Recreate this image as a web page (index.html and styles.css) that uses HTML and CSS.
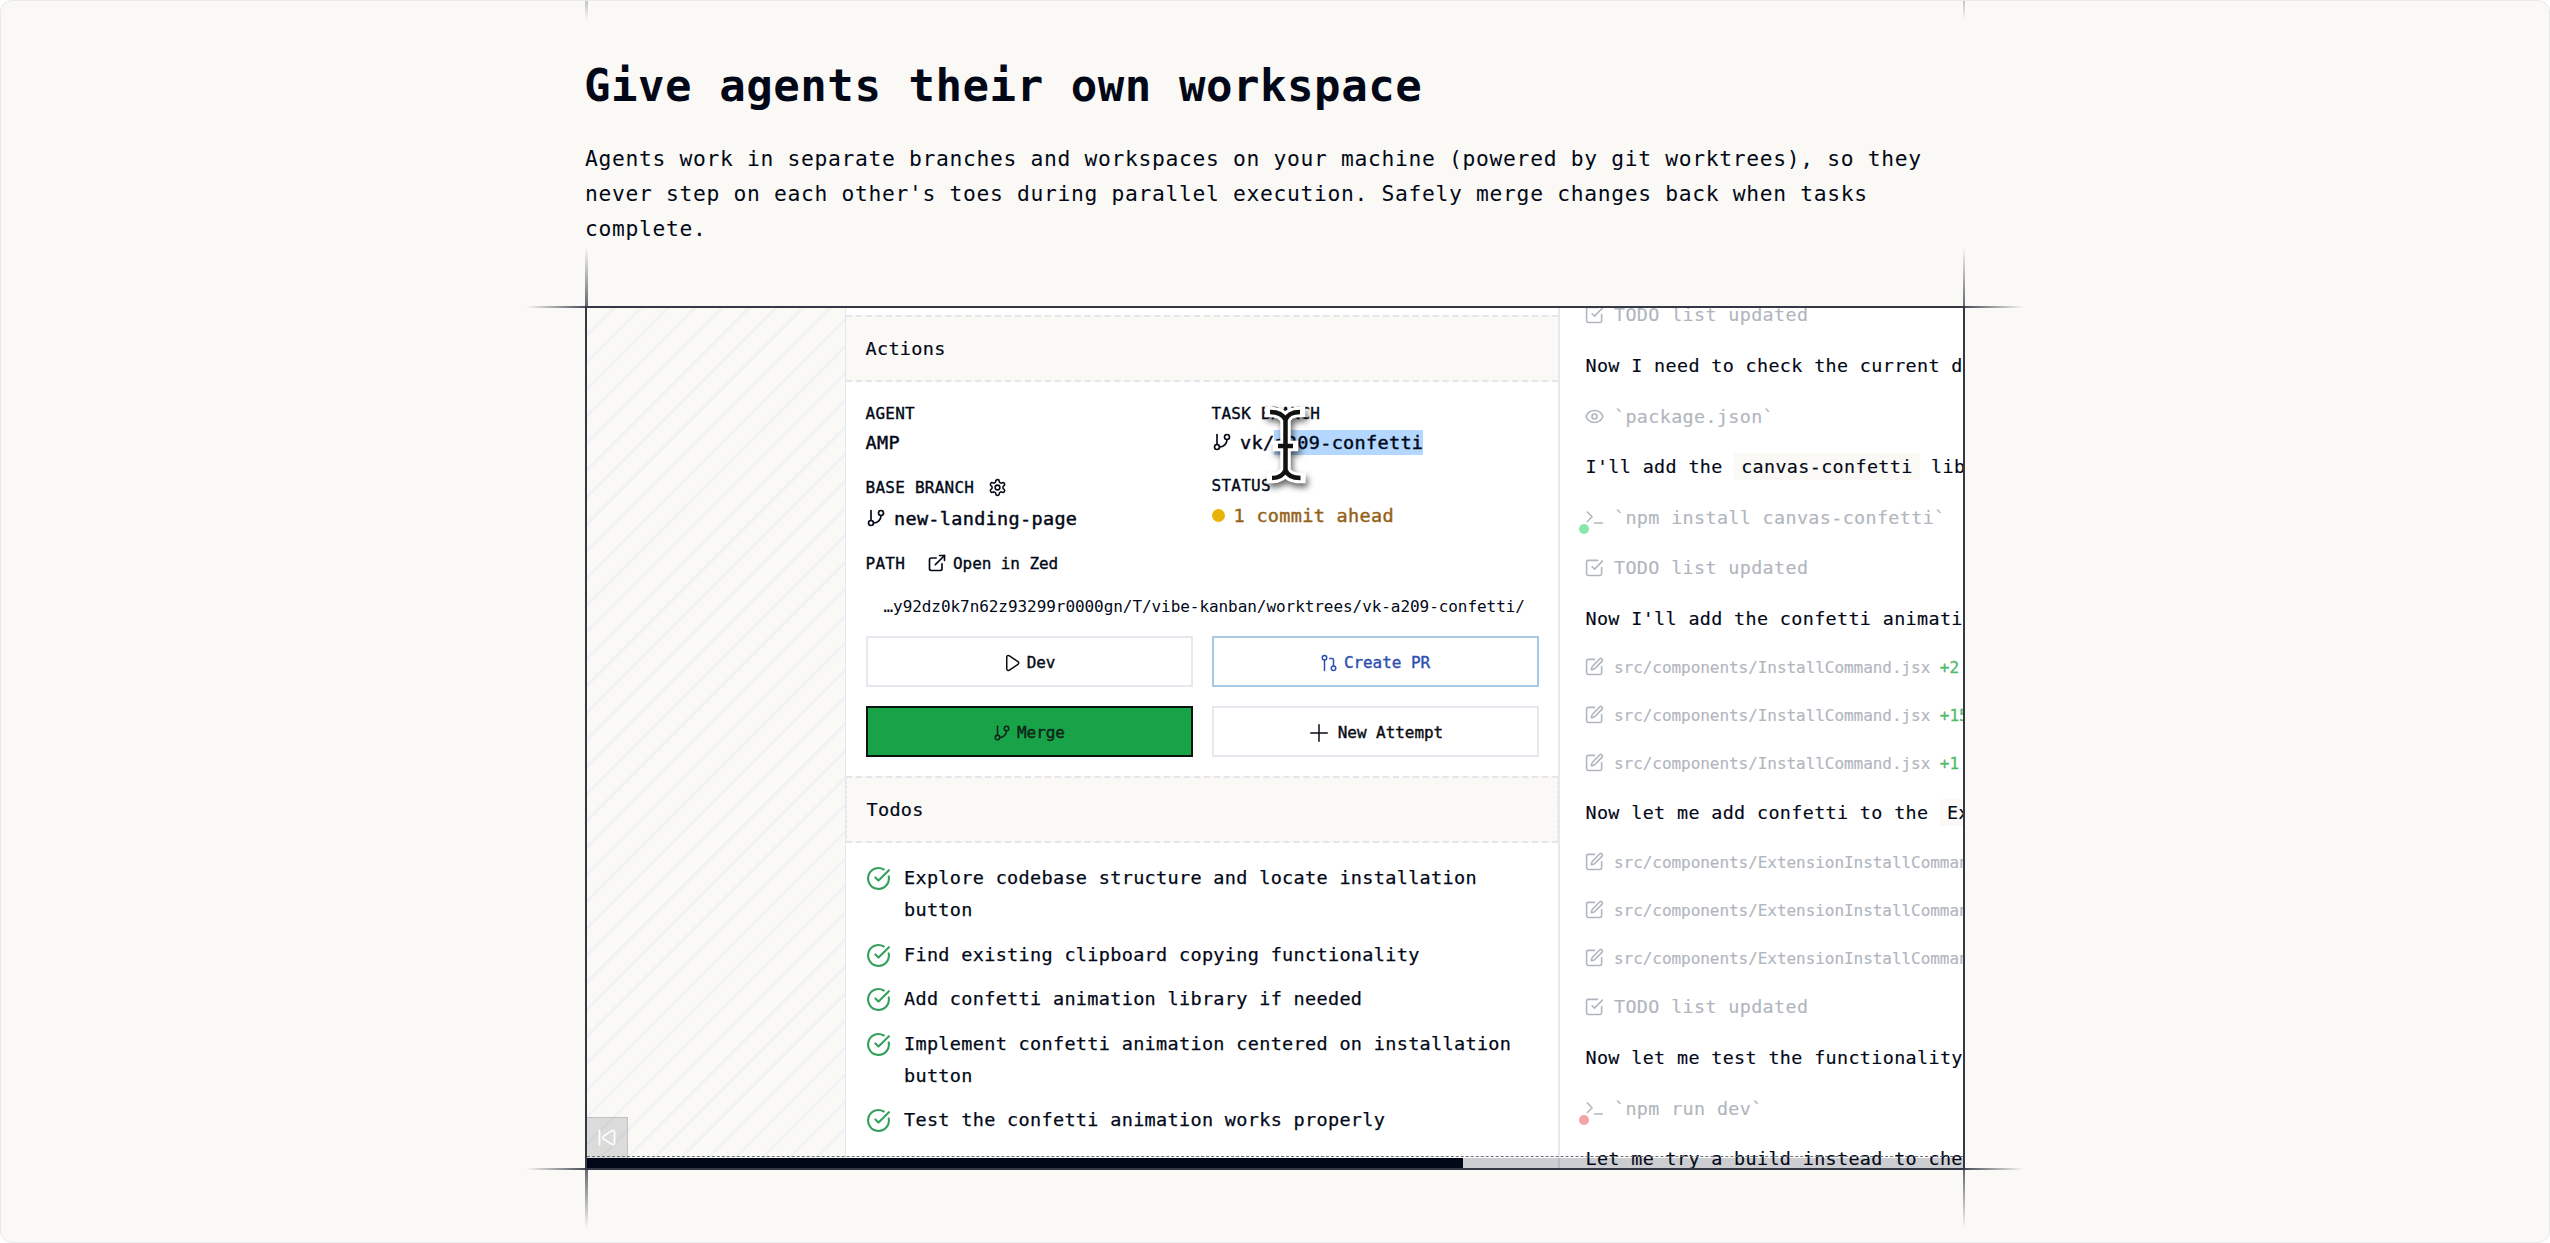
FILE: index.html
```
<!DOCTYPE html>
<html lang="en">
<head>
  <meta charset="UTF-8" />
  <meta name="viewport" content="width=device-width, initial-scale=1.0"/>
  <title>Give agents their own workspace</title>
  <link rel="stylesheet" href="styles.css">
</head>
<body>

  <!-- Icon set -->
  <svg class="sprite" width="0" height="0">
    <symbol id="branch" viewBox="0 0 24 24"><path d="M6 3v12"/><circle cx="18" cy="6" r="3"/><circle cx="6" cy="18" r="3"/><path d="M18 9a9 9 0 0 1-9 9"/></symbol>
    <symbol id="gear" viewBox="0 0 24 24"><path d="M12.22 2h-.44a2 2 0 0 0-2 2v.18a2 2 0 0 1-1 1.73l-.43.25a2 2 0 0 1-2 0l-.15-.08a2 2 0 0 0-2.73.73l-.22.38a2 2 0 0 0 .73 2.73l.15.1a2 2 0 0 1 1 1.72v.51a2 2 0 0 1-1 1.74l-.15.09a2 2 0 0 0-.73 2.73l.22.38a2 2 0 0 0 2.73.73l.15-.08a2 2 0 0 1 2 0l.43.25a2 2 0 0 1 1 1.73V20a2 2 0 0 0 2 2h.44a2 2 0 0 0 2-2v-.18a2 2 0 0 1 1-1.73l.43-.25a2 2 0 0 1 2 0l.15.08a2 2 0 0 0 2.73-.73l.22-.39a2 2 0 0 0-.73-2.73l-.15-.08a2 2 0 0 1-1-1.74v-.5a2 2 0 0 1 1-1.74l.15-.09a2 2 0 0 0 .73-2.73l-.22-.38a2 2 0 0 0-2.73-.73l-.15.08a2 2 0 0 1-2 0l-.43-.25a2 2 0 0 1-1-1.73V4a2 2 0 0 0-2-2z"/><circle cx="12" cy="12" r="3"/></symbol>
    <symbol id="external" viewBox="0 0 24 24"><path d="M15 3h6v6"/><path d="M10 14 21 3"/><path d="M18 13v6a2 2 0 0 1-2 2H5a2 2 0 0 1-2-2V8a2 2 0 0 1 2-2h6"/></symbol>
    <symbol id="play" viewBox="0 0 24 24"><path d="M5 4a2 2 0 0 1 3-1.7l12 8a2 2 0 0 1 0 3.4l-12 8A2 2 0 0 1 5 20z"/></symbol>
    <symbol id="pr" viewBox="0 0 24 24"><circle cx="6" cy="5" r="3"/><path d="M6 8v14"/><circle cx="18" cy="19" r="3"/><path d="M13 6h3a2 2 0 0 1 2 2v8"/></symbol>
    <symbol id="plus" viewBox="0 0 24 24"><path d="M1 12h22M12 1v22"/></symbol>
    <symbol id="done" viewBox="0 0 24 24"><path d="M21.8 10A10 10 0 1 1 17 3.34"/><path d="m9 11 3 3L22 4"/></symbol>
    <symbol id="todo" viewBox="0 0 24 24"><path d="m9 11 3 3L22 4"/><path d="M21 12v8a2 2 0 0 1-2 2H4a2 2 0 0 1-2-2V5a2 2 0 0 1 2-2h12"/></symbol>
    <symbol id="eye" viewBox="0 0 24 24"><path d="M1.5 12.4a1 1 0 0 1 0-.8 11.3 11.3 0 0 1 21 0 1 1 0 0 1 0 .8 11.3 11.3 0 0 1-21 0"/><circle cx="12" cy="12" r="3.2"/></symbol>
    <symbol id="term" viewBox="0 0 24 24"><path d="m3 17 6-6-6-6"/><path d="M12 19h10"/></symbol>
    <symbol id="edit" viewBox="0 0 24 24"><path d="M12 3H4a2 2 0 0 0-2 2v15a2 2 0 0 0 2 2h15a2 2 0 0 0 2-2v-8"/><path d="M18.4 2.6a2.1 2.1 0 0 1 3 3l-9 9a2 2 0 0 1-.9.5l-2.8.9a.5.5 0 0 1-.7-.7l.9-2.8a2 2 0 0 1 .5-.9z"/></symbol>
    <symbol id="back" viewBox="0 0 24 24"><path d="M3 3v18"/><path d="M21 5.5a2 2 0 0 0-3-1.7L8 10.3a2 2 0 0 0 0 3.4l10 6.5a2 2 0 0 0 3-1.7z"/></symbol>
  </svg>

  <section class="feature">
    <span class="tick-top left"></span>
    <span class="tick-top right"></span>

    <h2>Give agents their own workspace</h2>
    <p class="intro">Agents work in separate branches and workspaces on your machine (powered by git worktrees), so they never step on each other's toes during parallel execution. Safely merge changes back when tasks complete.</p>

    <div class="frame">
      <div class="video">
        <div class="hatch"></div>

        <div class="task">
          <div class="section-head">Actions</div>

          <div class="details">
            <div class="fields">
              <div class="field-col">
                <div class="label">AGENT</div>
                <div class="value">AMP</div>
                <div class="label second">BASE BRANCH <svg class="gear"><use href="#gear"/></svg></div>
                <div class="value low"><svg><use href="#branch"/></svg>new-landing-page</div>
              </div>
              <div class="field-col">
                <div class="label">TASK BRANCH</div>
                <div class="value branch"><svg><use href="#branch"/></svg>vk/<mark>a209-confetti</mark></div>
                <div class="label second">STATUS</div>
                <div class="value low status"><i></i>1 commit ahead</div>
                <!-- text cursor over the selection -->
                <svg class="cursor" viewBox="0 0 46 84">
                  <g class="halo"><path d="M7 9c8 0 13 2 15.500 8 2-6 7-8 14.500-8M22.500 16v52M9 75c6 0 11-2 13.500-8 2 6 7 8 15 8M15 43h15"/></g>
                  <g class="beam"><path d="M7 9c8 0 13 2 15.500 8 2-6 7-8 14.500-8M22.500 16v52M9 75c6 0 11-2 13.500-8 2 6 7 8 15 8M15 43h15"/></g>
                </svg>
              </div>
            </div>

            <div class="label path-label">PATH <svg><use href="#external"/></svg><span>Open in Zed</span></div>
            <div class="path">…y92dz0k7n62z93299r0000gn/T/vibe-kanban/worktrees/vk-a209-confetti/</div>

            <div class="buttons">
              <button><svg><use href="#play"/></svg>Dev</button>
              <button class="pr"><svg><use href="#pr"/></svg>Create PR</button>
              <button class="merge"><svg><use href="#branch"/></svg>Merge</button>
              <button class="new"><svg><use href="#plus"/></svg>New Attempt</button>
            </div>
          </div>

          <div class="section-head todos">Todos</div>
          <ul>
            <li><svg><use href="#done"/></svg><span>Explore codebase structure and locate installation button</span></li>
            <li><svg><use href="#done"/></svg><span>Find existing clipboard copying functionality</span></li>
            <li><svg><use href="#done"/></svg><span>Add confetti animation library if needed</span></li>
            <li><svg><use href="#done"/></svg><span>Implement confetti animation centered on installation button</span></li>
            <li><svg><use href="#done"/></svg><span>Test the confetti animation works properly</span></li>
          </ul>
        </div>

        <div class="log">
          <div class="row muted"><svg><use href="#todo"/></svg>TODO list updated</div>
          <div class="row">Now I need to check the current d</div>
          <div class="row muted"><svg><use href="#eye"/></svg>`package.json`</div>
          <div class="row">I'll add the <code>canvas-confetti</code> lib</div>
          <div class="row muted"><svg><use href="#term"/></svg><b class="dot ok"></b>`npm install canvas-confetti`</div>
          <div class="row muted"><svg><use href="#todo"/></svg>TODO list updated</div>
          <div class="row">Now I'll add the confetti animati</div>
          <div class="row file"><svg><use href="#edit"/></svg>src/components/InstallCommand.jsx <em>+2</em></div>
          <div class="row file"><svg><use href="#edit"/></svg>src/components/InstallCommand.jsx <em>+15</em></div>
          <div class="row file"><svg><use href="#edit"/></svg>src/components/InstallCommand.jsx <em>+1</em></div>
          <div class="row">Now let me add confetti to the <code>Ex</code></div>
          <div class="row file"><svg><use href="#edit"/></svg>src/components/ExtensionInstallComman</div>
          <div class="row file"><svg><use href="#edit"/></svg>src/components/ExtensionInstallComman</div>
          <div class="row file"><svg><use href="#edit"/></svg>src/components/ExtensionInstallComman</div>
          <div class="row muted"><svg><use href="#todo"/></svg>TODO list updated</div>
          <div class="row">Now let me test the functionality</div>
          <div class="row muted"><svg><use href="#term"/></svg><b class="dot fail"></b>`npm run dev`</div>
          <div class="row">Let me try a build instead to che</div>
        </div>

        <div class="rewind"><svg><use href="#back"/></svg></div>
        <div class="progress"><div class="bar" style="width: 63.65%"></div></div>
      </div>

      <!-- Crop marks -->
      <span class="mark h tl"></span><span class="mark h tr"></span>
      <span class="mark h bl"></span><span class="mark h br"></span>
      <span class="mark v tl"></span><span class="mark v tr"></span>
      <span class="mark v bl"></span><span class="mark v br"></span>
    </div>
  </section>

</body>
</html>
```
FILE: styles.css
```
* {
  box-sizing: border-box;
}

body {
  margin: 0;
  background: #fff;
  color: #020817;
  font-family: "DejaVu Sans Mono", "Liberation Mono", monospace;
}

svg {
  fill: none;
  stroke: currentColor;
  stroke-width: 2;
  stroke-linecap: round;
  stroke-linejoin: round;
  flex-shrink: 0;
}

.sprite {
  position: absolute;
}

.feature {
  position: relative;
  height: 1243px;
  padding: 58px 584px 0;
  background: #faf9f5;
  border: 1px solid #e9e9ea;
  border-radius: 12px;
  overflow: hidden;
}

h2 {
  margin: 0 0 0 -1px;
  font-size: 44px;
  line-height: 54px;
  letter-spacing: 0.55px;
  white-space: nowrap;
}

.intro {
  margin: 28px 0 60px;
  font-size: 21.3px;
  line-height: 35px;
  letter-spacing: 0.68px;
}

/* Video frame */
.frame {
  position: relative;
  width: 1380px;
  height: 864px;
  border: 2px solid #353945;
}

.video {
  position: relative;
  height: 860px;
  display: grid;
  grid-template-columns: 258px 713px 1fr;
  overflow: hidden;
  background: #fff;
  font-size: 18.5px;
  letter-spacing: 0.32px;
}

.hatch {
  background: repeating-linear-gradient(135deg, #f1f2f3 0, #f1f2f3 1px, #faf9f5 2px, #faf9f5 17.1px, #f1f2f3 18.1px, #f1f2f3 19.07px);
}

.task {
  border-left: 1px solid #e2e8f0;
  padding-top: 7px;
  min-width: 0;
}

.section-head {
  height: 67px;
  padding-left: 19.5px;
  line-height: 63px;
  background: #faf9f6;
  border: dashed #e4e6ea;
  border-width: 2px 0;
  -webkit-text-stroke: 0.2px;
}

.section-head.todos {
  margin-top: 19px;
  border-width: 2px 1px;
}

.details {
  padding: 19px 19.5px 0;
}

.fields {
  display: grid;
  grid-template-columns: 1fr 1fr;
  column-gap: 19px;
}

.field-col {
  position: relative;
}

.label {
  display: flex;
  align-items: center;
  height: 24px;
  font-size: 16px;
  letter-spacing: 0.25px;
  -webkit-text-stroke: 0.35px;
}

.value {
  display: flex;
  align-items: center;
  height: 26px;
  margin-top: 4px;
  -webkit-text-stroke: 0.45px;
}

.value svg {
  width: 20px;
  height: 20px;
  margin-right: 8.5px;
}

.label.second {
  margin-top: 20.5px;
}

.field-col + .field-col .second {
  margin-top: 18px;
}

.value.low {
  margin-top: 5.5px;
}

.gear {
  width: 19px;
  height: 19px;
  margin-left: 13.5px;
}

mark {
  color: inherit;
  background: #b3d7ff;
  line-height: 25px;
}

.status {
  color: #94631a;
}

.status i {
  width: 13px;
  height: 13px;
  margin-right: 9px;
  border-radius: 50%;
  background: #eab308;
}

.cursor {
  position: absolute;
  left: 51.5px;
  top: 2px;
  width: 46px;
  height: 84px;
  overflow: visible;
}

.halo {
  stroke: #fff;
  stroke-width: 10.5;
  stroke-linecap: square;
  filter: drop-shadow(2px 4px 3px rgba(0, 0, 0, 0.6));
}

.beam {
  stroke: #111;
  stroke-width: 4.5;
  stroke-linecap: butt;
}

.path-label {
  margin-top: 20px;
}

.path-label svg {
  width: 20px;
  height: 20px;
  margin: 0 6.5px 0 21.5px;
}

.path-label span {
  letter-spacing: -0.08px;
}

.path {
  margin: 19.5px 0 17.5px;
  padding-left: 18px;
  font-size: 16px;
  line-height: 24px;
  letter-spacing: -0.06px;
  white-space: nowrap;
}

.buttons {
  display: grid;
  grid-template-columns: 1fr 1fr;
  gap: 19px;
}

button {
  display: flex;
  align-items: center;
  justify-content: center;
  gap: 6px;
  height: 51px;
  padding: 2px 0 0;
  border: 2px solid #e6e8ed;
  background: #fff;
  color: #0b0d14;
  font: 16px/24px "DejaVu Sans Mono", monospace;
  letter-spacing: -0.05px;
  -webkit-text-stroke: 0.4px;
}

button svg {
  width: 18px;
  height: 18px;
}

button.pr {
  border-color: #a9c8e2;
  color: #2f4fb0;
}

button.merge {
  border-color: #08150d;
  background: #18a349;
  color: #0d2417;
}

button.new {
  gap: 10px;
  padding-left: 3px;
}

ul {
  display: flex;
  flex-direction: column;
  gap: 12.6px;
  margin: 0;
  padding: 19px 19.5px 0;
  list-style: none;
}

li {
  display: flex;
  gap: 13.5px;
  line-height: 32px;
  -webkit-text-stroke: 0.25px;
}

li svg {
  width: 25px;
  height: 25px;
  margin: 4px 0 0 0;
  color: #35a05c;
}

/* Agent log */
.log {
  border-left: 2px solid #e5e9ee;
  padding-left: 25.5px;
  margin-top: -17.7px;
  min-width: 0;
}

.row {
  position: relative;
  height: 50.6px;
  line-height: 50.6px;
  font-size: 18.4px;
  letter-spacing: 0.36px;
  white-space: pre;
  -webkit-text-stroke: 0.15px;
}

.row svg {
  width: 19px;
  height: 19px;
  margin: 0 10.5px 0 -1px;
  vertical-align: -3px;
}

.row.muted {
  color: #b1b6be;
}

.row.file {
  height: 47.9px;
  line-height: 48.6px;
  font-size: 16px;
  letter-spacing: -0.05px;
  color: #b1b6be;
}

.row em {
  font-style: normal;
  color: #4cb96b;
  -webkit-text-stroke: 0.3px;
}

code {
  padding: 3px 7px;
  background: #faf9f6;
  font: inherit;
}

.dot {
  position: absolute;
  left: -7px;
  top: 31px;
  width: 10px;
  height: 10px;
  border-radius: 50%;
}

.dot.ok {
  background: #86e8a8;
}

.dot.fail {
  background: #f4a3a5;
}

/* Player controls */
.rewind {
  position: absolute;
  left: 0;
  bottom: 10px;
  width: 41px;
  height: 41px;
  padding: 9px 10px;
  background: rgba(2, 8, 23, 0.12);
  border: 1px solid #c2c2c1;
  border-width: 1px 1px 0 0;
  color: #fff;
}

.rewind svg {
  width: 20px;
  height: 21px;
}

.progress {
  position: absolute;
  left: 0;
  right: 0;
  bottom: 0;
  height: 12px;
  padding-top: 1px;
  border-top: 1px dashed #6d7077;
  background: linear-gradient(rgba(2, 8, 23, 0.2), rgba(2, 8, 23, 0.2)) 0 1px no-repeat;
}

.bar {
  height: 10px;
  background: #020817;
}

/* Crop marks */
.mark,
.tick-top {
  position: absolute;
}

.mark.h {
  width: 59px;
  height: 2px;
}

.mark.v {
  width: 3px;
  height: 59px;
}

.h.tl, .h.bl {
  left: -61px;
  background: linear-gradient(to left, #4a4e58, transparent);
}

.h.tr, .h.br {
  right: -61px;
  background: linear-gradient(to right, #4a4e58, transparent);
}

.h.tl, .h.tr {
  top: -2px;
}

.h.bl, .h.br {
  bottom: -2px;
}

.v.tl, .v.tr {
  top: -61px;
  background: linear-gradient(to top, #656973, transparent);
}

.v.bl, .v.br {
  bottom: -61px;
  background: linear-gradient(to bottom, #656973, transparent);
}

.v.tl, .v.bl {
  left: -2px;
}

.v.tr, .v.br {
  right: -2px;
  width: 2px;
}

.tick-top {
  top: 0;
  width: 3px;
  height: 19px;
  background: linear-gradient(#c3c3c3, transparent);
}

.tick-top.left {
  left: 584px;
}

.tick-top.right {
  left: 1962px;
  width: 2px;
}
```
